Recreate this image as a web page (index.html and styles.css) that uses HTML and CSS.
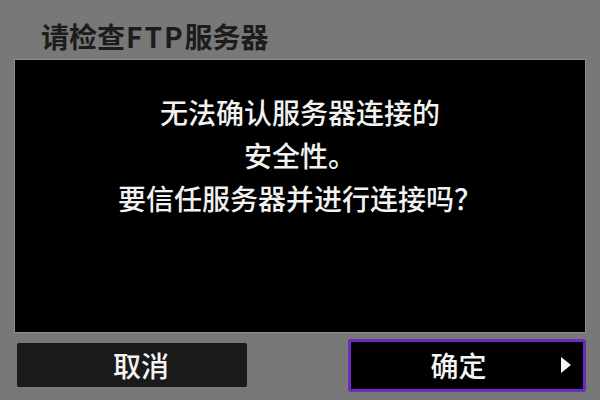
FILE: index.html
```html
<!DOCTYPE html>
<html lang="zh-CN">
<head>
<meta charset="utf-8">
<link rel="stylesheet" href="styles.css">
</head>
<body>
<div class="screen">
  <header class="title-bar"><h1 class="title">请检查<span class="latin">FTP</span>服务器</h1></header>
  <main class="panel">
    <p class="message">无法确认服务器连接的<br>安全性。<br>要信任服务器并进行连接吗？</p>
  </main>
  <footer class="actions">
    <button class="btn btn-cancel">取消</button>
    <button class="btn btn-ok">确定<span class="arrow"></span></button>
  </footer>
</div>
</body>
</html>
```
FILE: styles.css
```css
html, body {
  margin: 0;
  padding: 0;
}
body {
  background: #787878;
  font-family: "Noto Sans CJK SC", "Noto Sans", sans-serif;
}
.screen {
  width: 600px;
  height: 400px;
  display: flex;
  flex-direction: column;
  background: #787878;
}
.title-bar {
  height: 59px;
  padding-left: 41px;
  display: flex;
  align-items: center;
  box-sizing: border-box;
  padding-top: 12px;
}
.title {
  margin: 0;
  font-size: 28px;
  font-weight: 700;
  color: #1c1c1c;
  line-height: 30px;
}
.latin {
  letter-spacing: 2px;
  padding-left: 1px;
}
.panel {
  margin: 0 14px 0 14px;
  height: 274px;
  box-sizing: border-box;
  background: #000;
  border: 1px solid #8c8c8c;
  padding-top: 31px;
  text-align: center;
}
.message {
  margin: 0;
  color: #f2f2f2;
  font-size: 28px;
  line-height: 43px;
  font-weight: 500;
}
.actions {
  flex: 1;
  display: flex;
  align-items: center;
  justify-content: space-between;
  padding: 0 14px 3px 17px;
}
.btn {
  font-family: inherit;
  font-size: 28px;
  font-weight: 500;
  color: #f4f4f4;
  border: none;
  padding: 0;
  display: flex;
  align-items: center;
  justify-content: center;
  position: relative;
  line-height: 1;
}
.btn-cancel {
  width: 230px;
  height: 44px;
  background: #1a1a1a;
  border-radius: 2px;
  padding-left: 18px;
}
.btn-ok {
  width: 238px;
  height: 53px;
  background: #000;
  border: 3px solid #6a2cc2;
  border-radius: 3px;
  box-sizing: border-box;
  padding-right: 17px;
}
.arrow {
  position: absolute;
  right: 12px;
  top: 50%;
  margin-top: -8px;
  width: 0;
  height: 0;
  border-top: 8px solid transparent;
  border-bottom: 8px solid transparent;
  border-left: 10px solid #f4f4f4;
}
```
